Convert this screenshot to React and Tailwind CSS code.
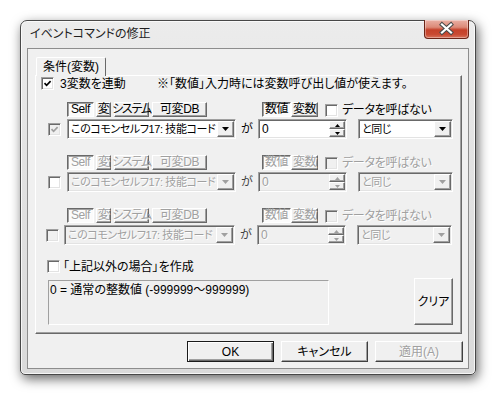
import React from 'react'

const sunken =
  'border border-t-[#a0a0a0] border-l-[#a0a0a0] border-r-white border-b-white shadow-[inset_1px_1px_0_#696969,inset_-1px_-1px_0_#e3e3e3]'
const raised =
  'border border-t-white border-l-white border-r-[#696969] border-b-[#696969] shadow-[inset_-1px_-1px_0_#a0a0a0]'
const pressed =
  'border border-t-[#696969] border-l-[#696969] border-r-white border-b-white shadow-[inset_1px_1px_0_#a0a0a0]'
const dim = 'text-[#a0a0a0] [text-shadow:1px_1px_0_#fff]'

function CheckBox({ checked, disabled }) {
  return (
    <span
      className={`flex h-[13px] w-[13px] shrink-0 items-center justify-center ${sunken} ${
        disabled ? 'bg-[#f0f0f0]' : 'bg-white'
      }`}
    >
      {checked && (
        <svg width="9" height="9" viewBox="0 0 9 9">
          <path
            d="M1.5 4.2 L3.6 6.3 L7.6 2.2"
            fill="none"
            stroke={disabled ? '#a0a0a0' : '#000'}
            strokeWidth="1.7"
          />
        </svg>
      )}
    </span>
  )
}

function Toggle({ label, on, disabled, className }) {
  return (
    <span
      className={`flex h-[15px] shrink-0 items-center justify-center whitespace-nowrap text-[12px] leading-[13px] tracking-[-0.4px] ${
        on ? `${pressed} bg-[#fbfbfb]` : `${raised} bg-[#f0f0f0]`
      } ${disabled ? dim : 'text-black'} ${className}`}
    >
      {label}
    </span>
  )
}

function DropButton({ disabled }) {
  return (
    <span className={`flex h-[16px] w-[17px] shrink-0 items-center justify-center bg-[#f0f0f0] ${raised}`}>
      <svg width="7" height="4" viewBox="0 0 7 4">
        <path d="M0 0h7L3.5 4z" fill={disabled ? '#a0a0a0' : '#000'} />
      </svg>
    </span>
  )
}

function Combo({ text, disabled, className }) {
  return (
    <div
      className={`flex h-[20px] shrink-0 items-center justify-between pl-[3px] pr-[1px] ${sunken} ${
        disabled ? 'bg-[#f0f0f0]' : 'bg-white'
      } ${className}`}
    >
      <span
        className={`whitespace-nowrap text-[11px] leading-[14px] tracking-[-0.4px] ${
          disabled ? dim : 'text-black'
        }`}
      >
        {text}
      </span>
      <DropButton disabled={disabled} />
    </div>
  )
}

function Spin({ disabled }) {
  const fill = disabled ? '#a0a0a0' : '#000'
  return (
    <div className="flex flex-col">
      <span className={`flex h-[8px] w-[16px] items-center justify-center bg-[#f0f0f0] ${raised}`}>
        <svg width="5" height="3" viewBox="0 0 5 3">
          <path d="M0 3h5L2.5 0z" fill={fill} />
        </svg>
      </span>
      <span className={`flex h-[8px] w-[16px] items-center justify-center bg-[#f0f0f0] ${raised}`}>
        <svg width="5" height="3" viewBox="0 0 5 3">
          <path d="M0 0h5L2.5 3z" fill={fill} />
        </svg>
      </span>
    </div>
  )
}

function Group({ disabled, checked, boxDisabled, shift }) {
  return (
    <div className="flex flex-col gap-[2px]">
      <div className="flex items-center">
        <div className="flex w-[226px] shrink-0 gap-[2px] pl-[31px]">
          <Toggle label="Self" on disabled={disabled} className="w-[27px]" />
          <Toggle label="変" disabled={disabled} className="w-[15px]" />
          <Toggle label="システム" disabled={disabled} className="ml-[1px] w-[35px] text-[11px] tracking-[-1.2px]" />
          <Toggle label="可変DB" disabled={disabled} className="ml-[1px] w-[55px]" />
        </div>
        <Toggle label="数値" on disabled={disabled} className="w-[29px]" />
        <Toggle label="変数" disabled={disabled} className="w-[27px]" />
        <span className="ml-[7px] mt-[3px]">
          <CheckBox disabled={disabled} />
        </span>
        <span
          className={`ml-[4px] mt-[2px] whitespace-nowrap text-[12px] leading-[14px] tracking-[-0.3px] ${
            disabled ? dim : 'text-black'
          }`}
        >
          データを呼ばない
        </span>
      </div>
      <div className="flex h-[20px] items-center">
        <span className={shift ? 'ml-[10px] mr-[5px]' : 'ml-[12px] mr-[6px]'}>
          <CheckBox checked={checked} disabled={boxDisabled} />
        </span>
        <Combo
          text="このコモンセルフ17: 技能コード"
          disabled={disabled}
          className={shift ? 'w-[171px]' : 'w-[169px]'}
        />
        <span className={`w-[22px] text-center text-[12px] leading-[14px] ${disabled ? 'text-[#404040]' : 'text-black'}`}>
          が
        </span>
        <div
          className={`flex h-[20px] w-[89px] shrink-0 items-center justify-between pl-[3px] pr-[1px] ${sunken} ${
            disabled ? 'bg-[#f0f0f0]' : 'bg-white'
          }`}
        >
          <span className={`text-[12px] leading-[14px] ${disabled ? dim : 'text-black'}`}>0</span>
          <Spin disabled={disabled} />
        </div>
        <Combo text="と同じ" disabled={disabled} className="ml-[11px] w-[95px]" />
      </div>
    </div>
  )
}

function CloseButton() {
  return (
    <div className="-mt-[1px] mr-[6px] h-[19px] w-[45px] overflow-hidden rounded-b-[4px] border border-t-0 border-[#6b2417] bg-[linear-gradient(180deg,#eab0a4_0%,#dc8a78_40%,#c5412a_55%,#c94a32_80%,#d8735c_100%)] shadow-[inset_0_0_0_1px_rgba(255,255,255,0.35)]">
      <svg width="43" height="18" viewBox="0 0 43 18">
        <path d="M17 4.5 L26 12.5 M26 4.5 L17 12.5" stroke="#4a4a4a" strokeWidth="4.2" strokeLinecap="square" />
        <path d="M17 4.5 L26 12.5 M26 4.5 L17 12.5" stroke="#fff" strokeWidth="2.2" strokeLinecap="square" />
      </svg>
    </div>
  )
}

function Button({ label, primary, disabled }) {
  return (
    <span
      className={`flex h-[21px] items-center justify-center bg-[#f0f0f0] text-[12px] leading-[14px] ${
        primary
          ? 'w-[87px] border border-[#1a1a1a] shadow-[inset_1px_1px_0_#fff,inset_-1px_-1px_0_#696969,inset_-2px_-2px_0_#a0a0a0]'
          : `${disabled ? 'w-[88px]' : 'w-[87px]'} border border-t-white border-l-white border-r-[#404040] border-b-[#404040] shadow-[inset_-1px_-1px_0_#a0a0a0]`
      } ${disabled ? dim : 'text-black'}`}
    >
      {label}
    </span>
  )
}

export default function App() {
  return (
    <div className="h-[396px] w-[496px] overflow-hidden bg-white pl-[20px] pt-[20px] font-['Liberation_Sans','Noto_Sans_CJK_JP',sans-serif] [font-feature-settings:'palt']">
      <div className="flex h-[355px] w-[456px] flex-col rounded-t-[7px] rounded-b-[5px] border border-[#484848] bg-[linear-gradient(180deg,#ececec_0%,#e2e2e2_40%,#dadada_100%)] shadow-[2px_4px_12px_rgba(0,0,0,0.6),inset_0_0_0_1px_rgba(255,255,255,0.75)]">
        <div className="flex h-[27px] shrink-0 items-start justify-between">
          <span className="ml-[9px] mt-[6px] text-[12px] leading-[14px] text-[#1e1e1e]">イベントコマンドの修正</span>
          <CloseButton />
        </div>

        <div className="mx-[6px] flex h-[321px] flex-col border border-[#8d8d8d] bg-[#f0f0f0]">
          <div className="relative z-10 ml-[8px] mt-[8px] -mb-[1px] flex h-[19px] w-[70px] items-center justify-center rounded-t-[2px] border border-b-0 border-t-white border-l-white border-r-[#696969] bg-[#f0f0f0] text-[12px] leading-[14px] text-black">
            条件(変数)
          </div>

          <div className="ml-[7px] mr-[6px] h-[259px] border border-t-white border-l-white border-r-[#696969] border-b-[#696969] shadow-[inset_-1px_-1px_0_#a0a0a0]">
            <div className="ml-[5px] mt-[1px] flex h-[13px] items-center whitespace-nowrap text-[12px] leading-[14px] text-black">
              <CheckBox checked />
              <span className="ml-[6px] w-[97px]">3変数を連動</span>
              <span>※「数値」入力時には変数呼び出し値が使えます。</span>
            </div>

            <div className="mt-[11px] flex flex-col gap-[15px]">
              <Group checked boxDisabled />
              <Group disabled />
              <Group disabled boxDisabled shift />
            </div>

            <div className="ml-[11px] mt-[15px] flex h-[13px] items-center text-[12px] leading-[14px] text-black">
              <CheckBox />
              <span className="ml-[3px]">「上記以外の場合」を作成</span>
            </div>

            <div className="mt-[5px] flex items-start">
              <div className="ml-[12px] mt-[2px] h-[45px] w-[281px] shrink-0 whitespace-nowrap border border-t-[#a0a0a0] border-l-[#a0a0a0] border-r-white border-b-white pl-[1px] pt-[2px] text-[12px] leading-[14px] text-black">
                0 = 通常の整数値 (-999999～999999)
              </div>
              <span
                className={`ml-[85px] flex h-[47px] w-[39px] shrink-0 items-center justify-center bg-[#f0f0f0] text-[12px] leading-[14px] text-black ${raised}`}
              >
                クリア
              </span>
            </div>
          </div>

          <div className="mt-[7px] flex justify-end gap-[7px] pr-[5px]">
            <Button label="OK" primary />
            <Button label="キャンセル" />
            <Button label="適用(A)" disabled />
          </div>
        </div>
      </div>
    </div>
  )
}
